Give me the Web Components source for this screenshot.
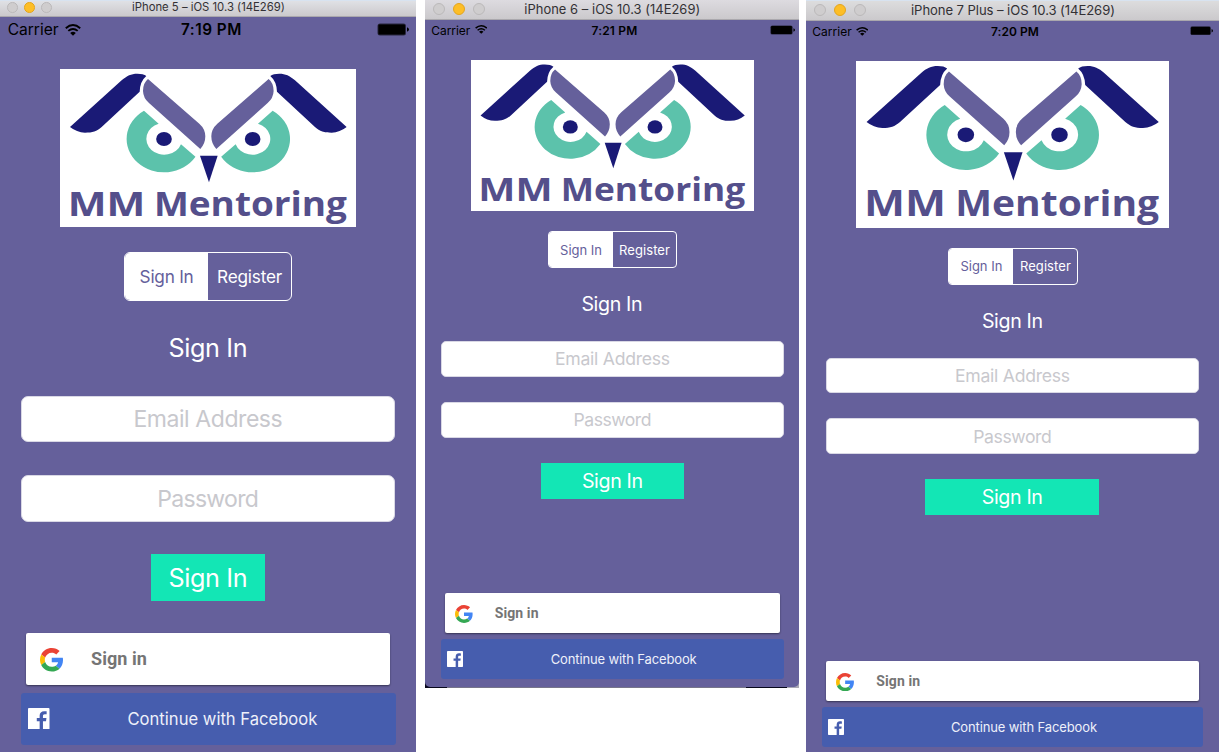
<!DOCTYPE html>
<html lang="en"><head><meta charset="utf-8"><title>MM Mentoring simulators</title>
<style>
body{margin:0;width:1221px;height:753px;overflow:hidden;background:#fff;font-family:Inter,"Liberation Sans",sans-serif;display:flex;align-items:flex-start}
#p6{margin-left:9px}#p7{margin-left:7px}
</style></head><body>
<sim-phone id="p5" model="iPhone 5 – iOS 10.3 (14E269)" time="7:19 PM"></sim-phone>
<sim-phone id="p6" model="iPhone 6 – iOS 10.3 (14E269)" time="7:21 PM"></sim-phone>
<sim-phone id="p7" model="iPhone 7 Plus – iOS 10.3 (14E269)" time="7:20 PM"></sim-phone>
<script>
const define=(name,html,after)=>customElements.define(name,class extends HTMLElement{
  connectedCallback(){
    if(this.shadowRoot)return;
    const r=this.attachShadow({mode:'open'});
    r.innerHTML=html;
    if(after)after.call(this,r);
  }
});

// Text tracked so that its ink spans a given width; "drop" lowers the baseline.
define('fit-text',`<style>:host{display:block;white-space:nowrap;line-height:1.2}span{display:inline-block}</style><span><slot></slot></span>`,function(r){
  const s=r.querySelector('span'),w=+this.getAttribute('w');
  const n=this.textContent.length;
  this.style.fontSize=this.getAttribute('size')+'px';
  const drop=+this.getAttribute('drop')||0;
  this.style.paddingTop=drop*2+'px';
  const d=(w+.9-s.getBoundingClientRect().width)/n;
  s.style.letterSpacing=d+'px';
  s.style.marginRight=-d+'px';
});

define('traffic-lights',`<style>:host{display:flex;gap:var(--g);padding-left:var(--pl)}
i{width:var(--d);height:var(--d);border-radius:50%;box-sizing:border-box;background:#cfcdce;border:1px solid #bbb9ba}
i:nth-of-type(2){background:#fdbe27;border-color:#e3a51f}</style><i></i><i></i><i></i>`);

define('wifi-icon',`<style>:host{display:block}svg{display:block;width:100%;height:100%}</style>
<svg viewBox="0 0 16 12" preserveAspectRatio="none"><g fill="none" stroke="#000" stroke-width="1.9"><path d="M.8 4.2Q8-2.2 15.2 4.2"/><path d="M3.3 6.9Q8 2.9 12.7 6.9"/></g><path d="M5.2 8.9Q8 6.7 10.8 8.9L8 11.8Z"/></svg>`);

define('battery-icon',`<style>:host{display:block}svg{display:block;width:100%;height:100%}</style>
<svg viewBox="0 0 32 13" preserveAspectRatio="none"><rect x=".5" y=".5" width="28.5" height="12" rx="2.5" fill="#000" fill-opacity=".6"/><rect x="1.4" y="1.4" width="26.6" height="10.2" rx="1"/><path d="M30 4.2Q32 5 32 6.5T30 8.8Z"/></svg>`);

define('owl-logo',`<style>:host{display:block;background:#fff}svg{display:block;width:100%;height:100%}text{font:bold 103px "Open Sans","Noto Sans",sans-serif}</style>
<svg viewBox="180 206 889 474" preserveAspectRatio="none">
<defs><g id="h"><path fill="#1a1a76" d="M210 380L365 240C381 226 393 220 412 220Q430 220 439 227Q420 243 419 274L305 380C290 393 278 397 255 397Q230 396 210 380Z"/>
<path fill="#65609b" d="M444 236L598 370Q616 386 616 408Q616 430 601 446L447 308Q430 294 429 272Q429 248 444 236Z"/>
<path fill="#5cc2ab" d="M432 331.5A112 100 0 1 0 586.5 469.5L543 431.5A53.5 47.5 0 1 1 476 370.5Z"/>
<ellipse cx="492" cy="416" rx="23.5" ry="21" fill="#1a1a76"/></g></defs>
<use href="#h"/><use href="#h" transform="matrix(-1 0 0 1 1250 0)"/>
<path fill="#1a1a76" d="M600 466H653L627 546Z"/>
<text y="648" fill="#544f8b"><tspan x="203" textLength="233" lengthAdjust="spacingAndGlyphs">MM</tspan> <tspan x="462" textLength="579" lengthAdjust="spacingAndGlyphs">Mentoring</tspan></text></svg>`);

define('segmented-control',`<style>:host{display:flex;box-sizing:border-box;border:var(--b) solid #fff;border-radius:var(--r);overflow:hidden;color:#fff}
div{display:flex;align-items:center;justify-content:center}.a{background:#fff;color:#65609b;flex:0 0 var(--split)}.b{flex:1}</style>
<div class="a"><slot name="on"></slot></div><div class="b"><slot></slot></div>`);

define('text-field',`<style>:host{display:flex;align-items:center;justify-content:center;box-sizing:border-box;background:#fff;border:1px solid #d9d8e5;border-radius:var(--r);color:#c8c8cd}</style><slot></slot>`);
define('action-button',`<style>:host{display:flex;align-items:center;justify-content:center;background:#13e6b5;color:#fff}</style><slot></slot>`);

define('google-button',`<style>:host{display:flex;align-items:center;box-sizing:border-box;background:#fff;border-radius:2px;box-shadow:0 1px 2px #0007;color:#757575;font-family:Roboto,sans-serif;font-weight:700;padding-left:var(--pl)}
svg{width:var(--i);height:var(--i);margin-right:var(--g);position:relative;top:1px}</style>
<svg viewBox="0 0 48 48"><path fill="#EA4335" d="M24 9.5c3.54 0 6.71 1.22 9.21 3.6l6.85-6.85C35.9 2.38 30.47 0 24 0 14.62 0 6.51 5.38 2.56 13.22l7.98 6.19C12.43 13.72 17.74 9.5 24 9.5z"/><path fill="#4285F4" d="M46.98 24.55c0-1.57-.15-3.09-.38-4.55H24v9.02h12.94c-.58 2.96-2.26 5.48-4.78 7.18l7.73 6c4.51-4.18 7.09-10.36 7.09-17.65z"/><path fill="#FBBC05" d="M10.53 28.59c-.48-1.45-.76-2.99-.76-4.59s.27-3.14.76-4.59l-7.98-6.19C.92 16.46 0 20.12 0 24s.92 7.54 2.56 10.78l7.97-6.19z"/><path fill="#34A853" d="M24 48c6.48 0 11.93-2.13 15.89-5.81l-7.73-6c-2.15 1.45-4.92 2.3-8.16 2.3-6.26 0-11.57-4.22-13.47-9.91l-7.98 6.19C6.51 42.62 14.62 48 24 48z"/></svg><slot></slot>`);

define('facebook-button',`<style>:host{display:flex;align-items:center;box-sizing:border-box;background:#465dae;border-radius:3px;color:#eef0fa;padding-left:var(--pl)}
svg{width:var(--i);height:var(--i);margin-right:var(--g)}</style>
<svg viewBox="0 0 24 24"><rect width="24" height="24" rx="1" fill="#fff"/><path fill="#465dae" d="M13 24V14.8H9.8V11.2H13V8.5C13 5.2 15 3.5 18 3.5C19.3 3.5 20.3 3.6 20.8 3.7V7H18.8C17.1 7 16.7 7.8 16.7 9V11.2H20.6L20.1 14.8H16.7V24Z"/></svg><slot></slot>`);

// Per-device metrics: boxes are [left, top, width, height] inside the window.
const METRICS={
 p5:{w:416,h:752,bar:16.5,top:'#dfe0e4',title:[132,152,11.3],lights:[7,6.5,10.7],td:.5,
  sy:30.5,carrier:[7.7,50,15.6],wifi:[65,16,12],time:[181,60,15.3],bat:[377,32,13,-.7],
  logo:[60,68.7,296.3,158],seg:[124,252.3,168,48.7],split:83.3,b:1.5,segF:[53,64,17.2],
  head:[347.5,78,25.2],f1:[21.3,395.7,373.5,46.3],f2:475.3,ff:[148,100,23],fd:1,hd:1,r:7,
  btn:[150.8,554,114.4,47],g:[26,632.7,364,52.3],gp:[13.5,23.5,28],gt:[55,18],
  fb:[21,692.6,374.5,52],fp:[7.3,21.5,77.7],ft:[189,16.6]},
 p6:{w:374,h:688,bar:19.7,top:'#dddbe0',title:[99.3,175,12.9],lights:[8,8,12],td:.3,
  sy:30.5,carrier:[6.3,38,12],wifi:[50,12.5,9],time:[166.5,45,12],bat:[345,25,10,0],sd:.5,
  logo:[46,60,283,151],seg:[123,231,129,37],split:64,b:1,segF:[41,50,13],
  head:[304.5,60,19.6],f1:[16,341,343,36],f2:402,ff:[114,76.5,17.6],fd:0,hd:1,r:5,
  btn:[116,463,143,36],g:[20,593,335,40],gp:[10,18,21.7],gt:[43,14],
  fb:[16,639,343,40],fp:[6,16,87.7],ft:[145,13]},
 p7:{w:413,h:752,bar:21,top:'#dcdcdd',title:[105,203,13.1],lights:[8,8,12],td:1,
  sy:31.5,carrier:[6.3,38.5,12],wifi:[50,12.5,9],time:[185,47,12],bat:[384,23,9.5,-1],sd:.5,
  logo:[50,61,313,166.5],seg:[142.4,247.5,130,37],split:64,b:1.2,segF:[41,50,13],
  head:[321,60,19.6],f1:[20,357.6,373,35.8],f2:418.5,ff:[114,77,17.6],fd:0,hd:1,r:5,
  btn:[119.3,478.7,174,36.6],g:[20,661,373,40],gp:[10,18.3,22],gt:[43,14],
  fb:[16,707,381,40],fp:[6,16,107],ft:[145,13]}
};

define('sim-phone','',function(r){
  const m=METRICS[this.id],p6=this.id==='p6';
  let y=m.bar;
  const row=(b,extra='')=>{const s=`margin:${b[1]-y}px 0 0 ${b[0]}px;width:${b[2]}px;height:${b[3]}px;${extra}`;y=b[1]+b[3];return s;};
  const t=(w,size,txt,drop=0,slot='')=>`<fit-text ${slot} w="${w}" size="${size}" drop="${drop}">${txt}</fit-text>`;
  const sh=20;
  let out=`<style>
:host{display:block;flex:none;width:${m.w}px;height:${m.h}px;background:${p6?'linear-gradient(90deg,#08081c 22px,#77758a 22px,#77758a 321px,#08081c 321px,#08081c 362px,#aaa9b5 362px)':'#65609b'}}
.win{display:flex;flex-direction:column;height:${p6?m.h-1:m.h}px;background:#65609b;${p6?'border-radius:0 0 5px 5px;':''}}
.win>*{flex:none;box-sizing:border-box}
.bar{height:${m.bar}px;background:linear-gradient(${p6?m.top:'#d8e3f0 1px,'+m.top+' 1.5px'},#cbc9cc);border-bottom:1px solid #aaa8ad;display:flex;align-items:center;color:#333135}
.bar traffic-lights{width:${m.title[0]}px;box-sizing:border-box;flex:none;--g:${m.lights[1]}px;--pl:${m.lights[0]}px;--d:${m.lights[2]}px}
.status{display:grid;align-items:center;color:#000;grid-template-columns:${m.wifi[0]-m.carrier[0]}px ${m.time[0]-m.wifi[0]}px ${m.bat[0]-m.time[0]}px ${m.bat[1]}px}
.status>:nth-child(3){font-weight:600}
.head{display:flex;align-items:center;justify-content:center;color:#fff}
</style><div class="win"><div class="bar"><traffic-lights></traffic-lights>${t(m.title[1],m.title[2],this.getAttribute('model'),m.td)}</div>`;
  out+=`<div class="status" style="${row([m.carrier[0],m.sy-sh/2,m.w-m.carrier[0],sh])}">${t(m.carrier[1],m.carrier[2],'Carrier',m.sd)}<wifi-icon style="width:${m.wifi[1]}px;height:${m.wifi[2]}px;margin-top:-1px"></wifi-icon>${t(m.time[1],m.time[2],this.getAttribute('time'),m.sd)}<battery-icon style="height:${m.bat[2]}px;margin-top:${m.bat[3]*2}px"></battery-icon></div>`;
  out+=`<owl-logo style="${row(m.logo)}"></owl-logo>`;
  out+=`<segmented-control style="${row(m.seg,`--split:${m.split}px;--b:${m.b}px;--r:${m.r-1}px`)}">${t(m.segF[0],m.segF[2],'Sign In',1,'slot="on"')}${t(m.segF[1],m.segF[2],'Register',1)}</segmented-control>`;
  out+=`<div class="head" style="${row([0,m.head[0]-16,m.w,32])}">${t(m.head[1],m.head[2],'Sign In',p6?0:1)}</div>`;
  out+=`<text-field style="${row(m.f1,`--r:${m.r}px`)}">${t(m.ff[0],m.ff[2],'Email Address',m.fd)}</text-field>`;
  out+=`<text-field style="${row([m.f1[0],m.f2,m.f1[2],m.f1[3]],`--r:${m.r}px`)}">${t(m.ff[1],m.ff[2],'Password',m.fd)}</text-field>`;
  out+=`<action-button style="${row(m.btn)}">${t(m.head[1],m.head[2],'Sign In',m.hd)}</action-button>`;
  out+=`<google-button style="${row(m.g,`--pl:${m.gp[0]}px;--i:${m.gp[1]}px;--g:${m.gp[2]}px`)}">${t(m.gt[0],m.gt[1],'Sign in',.5)}</google-button>`;
  out+=`<facebook-button style="${row(m.fb,`--pl:${m.fp[0]}px;--i:${m.fp[1]}px;--g:${m.fp[2]}px`)}">${t(m.ft[0],m.ft[1],'Continue with Facebook',1)}</facebook-button></div>`;
  r.innerHTML=out;
});
</script></body></html>
